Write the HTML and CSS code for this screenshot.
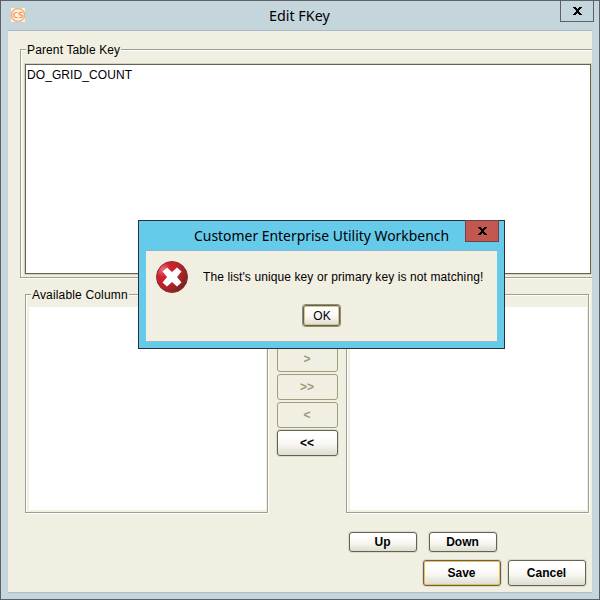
FILE: index.html
```html
<!DOCTYPE html>
<html lang="en">
<head>
<meta charset="utf-8">
<title>Edit FKey</title>
<link rel="stylesheet" href="styles.css">
</head>
<body>
<div class="window">
  <header class="titlebar">
    <svg class="app-icon" width="14" height="14" viewBox="0 0 14 14">
      <rect width="14" height="14" fill="#fbf1e4"/>
      <path d="M4.200.8h5.600l3.400 3.400v5.600l-3.400 3.400H4.200L.8 9.800V4.200z" fill="none" stroke="#f3a765" stroke-width="1.300"/>
      <path d="M6.500 4.500H4.500l-1.500 1v3l1.500 1h2M11.500 4.500H9l-1 .8v.8l1 .8h1.300l1 .8v1l-1 .8H7.800" fill="none" stroke="#f0954b" stroke-width="1.200"/>
    </svg>
    <h1 class="title"><span class="t-edit">Edit FKey</span></h1>
    <button class="close" aria-label="Close"><svg width="9" height="8" viewBox="0 0 9 8"><path d="M0 0h3v1h1v1h1V1h1V0h3v1H8v1H7v1H6v2h1v1h1v1h1v1H6V7H5V6H4v1H3v1H0V7h1V6h1V5h1V3H2V2H1V1H0z"/></svg></button>
  </header>
  <main class="content">
    <section class="group parent">
      <h2 class="legend"><span class="t-parent">Parent Table Key</span></h2>
      <div class="list"><span class="t-grid">DO_GRID_COUNT</span></div>
    </section>
    <div class="columns">
      <section class="group col">
        <h2 class="legend"><span class="t-avail">Available Column</span></h2>
        <div class="pane"></div>
      </section>
      <div class="movers">
        <button class="btn off">&gt;</button>
        <button class="btn off">&gt;&gt;</button>
        <button class="btn off">&lt;</button>
        <button class="btn">&lt;&lt;</button>
      </div>
      <section class="group col"><div class="pane"></div></section>
    </div>
    <div class="order">
      <button class="btn">Up</button>
      <button class="btn">Down</button>
    </div>
    <footer class="actions">
      <button class="btn focus">Save</button>
      <button class="btn">Cancel</button>
    </footer>
  </main>
</div>
<div class="dialog" role="alertdialog">
  <header class="dialog-title">
    <h1><span class="t-dialog">Customer Enterprise Utility Workbench</span></h1>
    <button class="close red" aria-label="Close"><svg width="9" height="8" viewBox="0 0 9 8"><path d="M0 0h3v1h1v1h1V1h1V0h3v1H8v1H7v1H6v2h1v1h1v1h1v1H6V7H5V6H4v1H3v1H0V7h1V6h1V5h1V3H2V2H1V1H0z"/></svg></button>
  </header>
  <div class="dialog-body">
    <div class="message">
      <svg width="32" height="32" viewBox="0 0 32 32">
        <defs><radialGradient id="red" cx=".2" cy=".25" r=".85"><stop offset="0" stop-color="#ea6c7c"/><stop offset=".3" stop-color="#d0202b"/><stop offset=".65" stop-color="#b82328"/><stop offset="1" stop-color="#7c2420"/></radialGradient></defs>
        <circle cx="16" cy="16" r="15.500" fill="url(#red)" stroke="#8b3433"/>
        <path d="M11 6.500l5 4.500 5-4.500 4.500 4-4.500 5.500 4.500 5.500-4.500 4-5-4.500-5 4.500-4.500-4 4.500-5.500-4.500-5.500z" fill="#fff"/>
      </svg>
      <p><span class="t-msg">The list's unique key or primary key is not matching!</span></p>
    </div>
    <button class="btn ok"><span>OK</span></button>
  </div>
</div>
</body>
</html>
```
FILE: styles.css
```css
* { box-sizing: border-box; }
body {
  margin: 0;
  width: 600px;
  height: 600px;
  overflow: hidden;
  font: 12px/14px "Liberation Sans", Arial, sans-serif;
  color: #000;
}
h1, h2, p { margin: 0; font-weight: normal; white-space: nowrap; }
button { font: inherit; padding: 0; margin: 0; }

.window {
  width: 600px;
  height: 600px;
  padding: 0 7px 7px;
  border: 1px solid #5d6067;
  background: #c4d6dc;
}
.titlebar { display: flex; height: 29px; align-items: flex-start; margin-right: -2px; }
.app-icon { margin: 7px 0 0 3px; }
.title {
  flex: 1;
  padding-left: 244px;
  font: 15px/29px "Noto Sans", sans-serif;
}
.t-edit, .t-dialog { display: inline-block; transform-origin: 0 50%; }
.t-edit { transform: scaleX(0.955); }
.t-parent { letter-spacing: 0.13px; }
.t-grid { letter-spacing: 0.08px; }
.t-avail { letter-spacing: 0.16px; }
.t-msg { letter-spacing: 0.1px; }
.close {
  display: grid;
  place-items: center;
  width: 34px;
  height: 22px;
  margin-top: -1px;
  border: 1px solid #5d6067;
  background: #c4d6dc;
}
.content {
  height: 563px;
  border-top: 1px solid #aab8c8;
  border-bottom: 1px solid #b0bcc2;
  background: #f1efe2;
  overflow: hidden;
}

.group {
  position: relative;
  border: 1px solid #9e9e94;
  box-shadow: 1px 1px 0 #fff, inset 1px 1px 0 #fff;
}
.legend {
  position: absolute;
  top: -7px;
  left: 5px;
  height: 15px;
  padding: 0 1px;
  background: #f1efe2;
  font-size: 12px;
  line-height: 15px;
}
.parent {
  width: 590px;
  height: 229px;
  margin: 18px 0 0 12px;
  padding: 14px 0 0 4px;
}
.list {
  width: 566px;
  height: 210px;
  padding: 3px 1px;
  border: 1px solid #65624f;
  background: #fff;
  box-shadow: 0 0 0 1px #d4d2c2;
}
.columns { display: flex; margin: 16px 0 0 17px; }
.col { width: 243px; height: 219px; padding: 12px 1px 2px 3px; }
.pane { height: 203px; background: #fff; }
.movers {
  display: flex;
  flex-direction: column;
  gap: 2px;
  width: 78px;
  padding: 52px 8px 0 9px;
}
.btn {
  height: 26px;
  padding-right: 1px;
  border: 1px solid #65624f;
  border-radius: 3px;
  background: linear-gradient(#fff 20%, #f8f7f3 55%, #deddd0);
  box-shadow: 0 0 0 1px #dad9cd;
  color: #000;
  font-weight: bold;
  line-height: 24px;
}
.off { border-color: #a09d7b; background: #f1efe2; box-shadow: none; color: #9c9978; }
.order { display: flex; gap: 12px; margin: 19px 0 0 341px; }
.order .btn { width: 68px; height: 20px; line-height: 19px; }
.actions { display: flex; gap: 7px; margin: 8px 0 0 415px; }
.actions .btn { width: 78px; }
.focus {
  box-shadow: 0 0 0 1px #dad9cd, inset 0 0 0 1px #edbf4d;
}

.dialog {
  position: absolute;
  left: 138px;
  top: 220px;
  width: 367px;
  height: 129px;
  padding: 0 7px;
  border: 1px solid #2c303a;
  background: #66caeb;
}
.dialog-title { display: flex; height: 29px; margin-right: -2px; }
.dialog-title h1 { flex: 1; width: 0; padding-left: 48px; font: 15px/29px "Noto Sans", sans-serif; }
.t-dialog { transform: scaleX(0.928); }
.red { border-color: #6f4048; background: #c35850; }
.dialog-body {
  height: 92px;
  border-top: 1px solid #83b6cc;
  border-bottom: 1px solid #9cb9bd;
  background: #f1efe2;
}
.message { display: flex; align-items: center; gap: 15px; padding: 10px 0 0 10px; }
.ok {
  display: block;
  width: 37px;
  height: 21px;
  margin: 12px 0 0 157px;
  padding: 0 0 0 1px;
  font-weight: normal;
  line-height: 20px;
  box-shadow: 0 0 0 1px #8c8d80, inset 0 0 0 1px #dfc678;
}
```
